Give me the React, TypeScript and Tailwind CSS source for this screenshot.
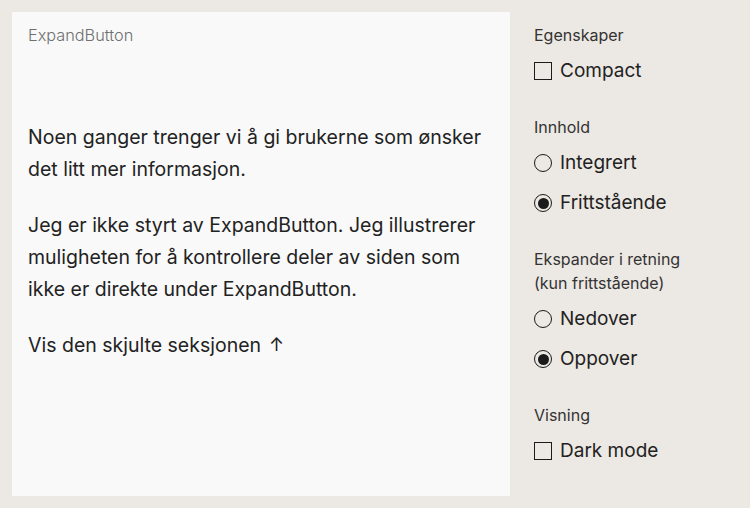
import React, { useState } from "react";

const font = { fontFamily: "Inter, 'Noto Sans', sans-serif" };

type OptionProps = {
  type: "checkbox" | "radio";
  label: string;
  checked: boolean;
  onChange: () => void;
};

const Option: React.FC<OptionProps> = ({ type, label, checked, onChange }) => (
  <label className="flex h-10 cursor-pointer items-center gap-2">
    {type === "checkbox" ? (
      <span className="flex h-[18px] w-[18px] flex-shrink-0 items-center justify-center border-[1.5px] border-[#1b1b1b] bg-transparent">
        {checked && <span className="h-2.5 w-2.5 bg-[#1b1b1b]" />}
      </span>
    ) : (
      <span className="flex h-[18px] w-[18px] flex-shrink-0 items-center justify-center rounded-full border-[1.5px] border-[#1b1b1b]">
        {checked && <span className="h-[11px] w-[11px] rounded-full bg-[#1b1b1b]" />}
      </span>
    )}
    <input type={type} checked={checked} onChange={onChange} className="sr-only" />
    <span className="text-[19px] leading-7 text-[#222]">{label}</span>
  </label>
);

export default function App() {
  const [compact, setCompact] = useState(false);
  const [content, setContent] = useState<"integrert" | "frittstaende">("frittstaende");
  const [direction, setDirection] = useState<"ned" | "opp">("opp");
  const [dark, setDark] = useState(false);

  return (
    <div className="flex h-screen gap-6 bg-[#ece8e3] p-3" style={font}>
      {/* Preview */}
      <div className="flex w-[498px] flex-col bg-[#f9f9f9] px-4 pt-[11px]">
        <div className="text-[16.3px] leading-6 font-light text-[#6f6f6f]">ExpandButton</div>
        <div className="mt-[74px] space-y-6 text-[19.5px] leading-8 text-[#222]">
          <p>Noen ganger trenger vi å gi brukerne som ønsker det litt mer informasjon.</p>
          <p>
            Jeg er ikke styrt av ExpandButton. Jeg illustrerer muligheten for å kontrollere deler av
            siden som ikke er direkte under ExpandButton.
          </p>
          <button className="flex h-8 items-center gap-2 text-left leading-8">
            Vis den skjulte seksjonen <span className="text-[18px]">↑</span>
          </button>
        </div>
      </div>

      {/* Controls */}
      <div className="w-[204px] space-y-6 pt-[11px]">
        <fieldset>
          <legend className="mb-1 text-base leading-6 text-[#333]">Egenskaper</legend>
          <Option type="checkbox" label="Compact" checked={compact} onChange={() => setCompact(!compact)} />
        </fieldset>
        <fieldset>
          <legend className="mb-1 text-base leading-6 text-[#333]">Innhold</legend>
          <Option type="radio" label="Integrert" checked={content === "integrert"} onChange={() => setContent("integrert")} />
          <Option type="radio" label="Frittstående" checked={content === "frittstaende"} onChange={() => setContent("frittstaende")} />
        </fieldset>
        <fieldset>
          <legend className="mb-1 text-base leading-6 text-[#333]">
            Ekspander i retning
            <br />
            (kun frittstående)
          </legend>
          <Option type="radio" label="Nedover" checked={direction === "ned"} onChange={() => setDirection("ned")} />
          <Option type="radio" label="Oppover" checked={direction === "opp"} onChange={() => setDirection("opp")} />
        </fieldset>
        <fieldset>
          <legend className="mb-1 text-base leading-6 text-[#333]">Visning</legend>
          <Option type="checkbox" label="Dark mode" checked={dark} onChange={() => setDark(!dark)} />
        </fieldset>
      </div>
    </div>
  );
}
